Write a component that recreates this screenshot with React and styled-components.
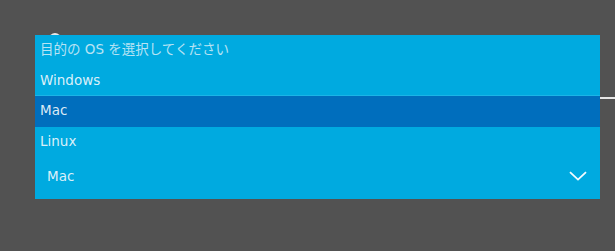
import React from 'react';
import styled, { createGlobalStyle } from 'styled-components';

const Global = createGlobalStyle`
  html, body {
    margin: 0;
    padding: 0;
    background: #525252;
  }
  body {
    font-family: "DejaVu Sans", "Noto Sans CJK JP", sans-serif;
  }
`;

const Stage = styled.div`
  position: relative;
  width: 615px;
  height: 251px;
  overflow: hidden;
  background: #525252;
`;

// the field that sits under the open list
const Field = styled.div`
  padding: 33px 0 0 49px;
  display: flex;
  flex-direction: column;
`;

const Knob = styled.div`
  width: 12px;
  height: 12px;
  border-radius: 50%;
  background: #e8e8e8;
`;

const Rule = styled.div`
  margin: 52px 0 0 -9px;
  height: 2px;
  background: #e6e6e6;
`;

const Dropdown = styled.div`
  position: absolute;
  left: 35px;
  top: 35px;
  width: 565px;
  background: #00aae0;
  display: flex;
  flex-direction: column;
`;

const Option = styled.div`
  height: ${(p) => (p.$first ? 30 : 31)}px;
  padding: 0 0 ${(p) => (p.$divider ? 1 : 4)}px 5px;
  display: flex;
  align-items: center;
  font-size: 13.5px;
  color: ${(p) => (p.$muted ? 'rgba(235, 245, 250, 0.78)' : 'rgba(240, 248, 252, 0.92)')};
  background: ${(p) => (p.$selected ? '#006ebd' : 'transparent')};
  border-bottom: ${(p) => (p.$divider ? '1px solid #1cb4e6' : 'none')};
  box-sizing: border-box;
`;

const Current = styled.div`
  height: 41px;
  padding: 0 13px 5px 12px;
  box-sizing: border-box;
  display: flex;
  align-items: center;
  justify-content: space-between;
  font-size: 13.5px;
  color: rgba(240, 248, 252, 0.92);
`;

const Chevron = () => (
  <svg width="18" height="10" viewBox="0 0 18 10" fill="none">
    <path d="M1 1.2 L9 8.6 L17 1.2" stroke="#f4fbff" strokeWidth="1.8" />
  </svg>
);

export default function App() {
  return (
    <Stage>
      <Global />
      <Field>
        <Knob />
        <Rule />
      </Field>
      <Dropdown>
        <Option $first $muted>目的の OS を選択してください</Option>
        <Option $divider>Windows</Option>
        <Option $selected>Mac</Option>
        <Option>Linux</Option>
        <Current>
          <span>Mac</span>
          <Chevron />
        </Current>
      </Dropdown>
    </Stage>
  );
}
